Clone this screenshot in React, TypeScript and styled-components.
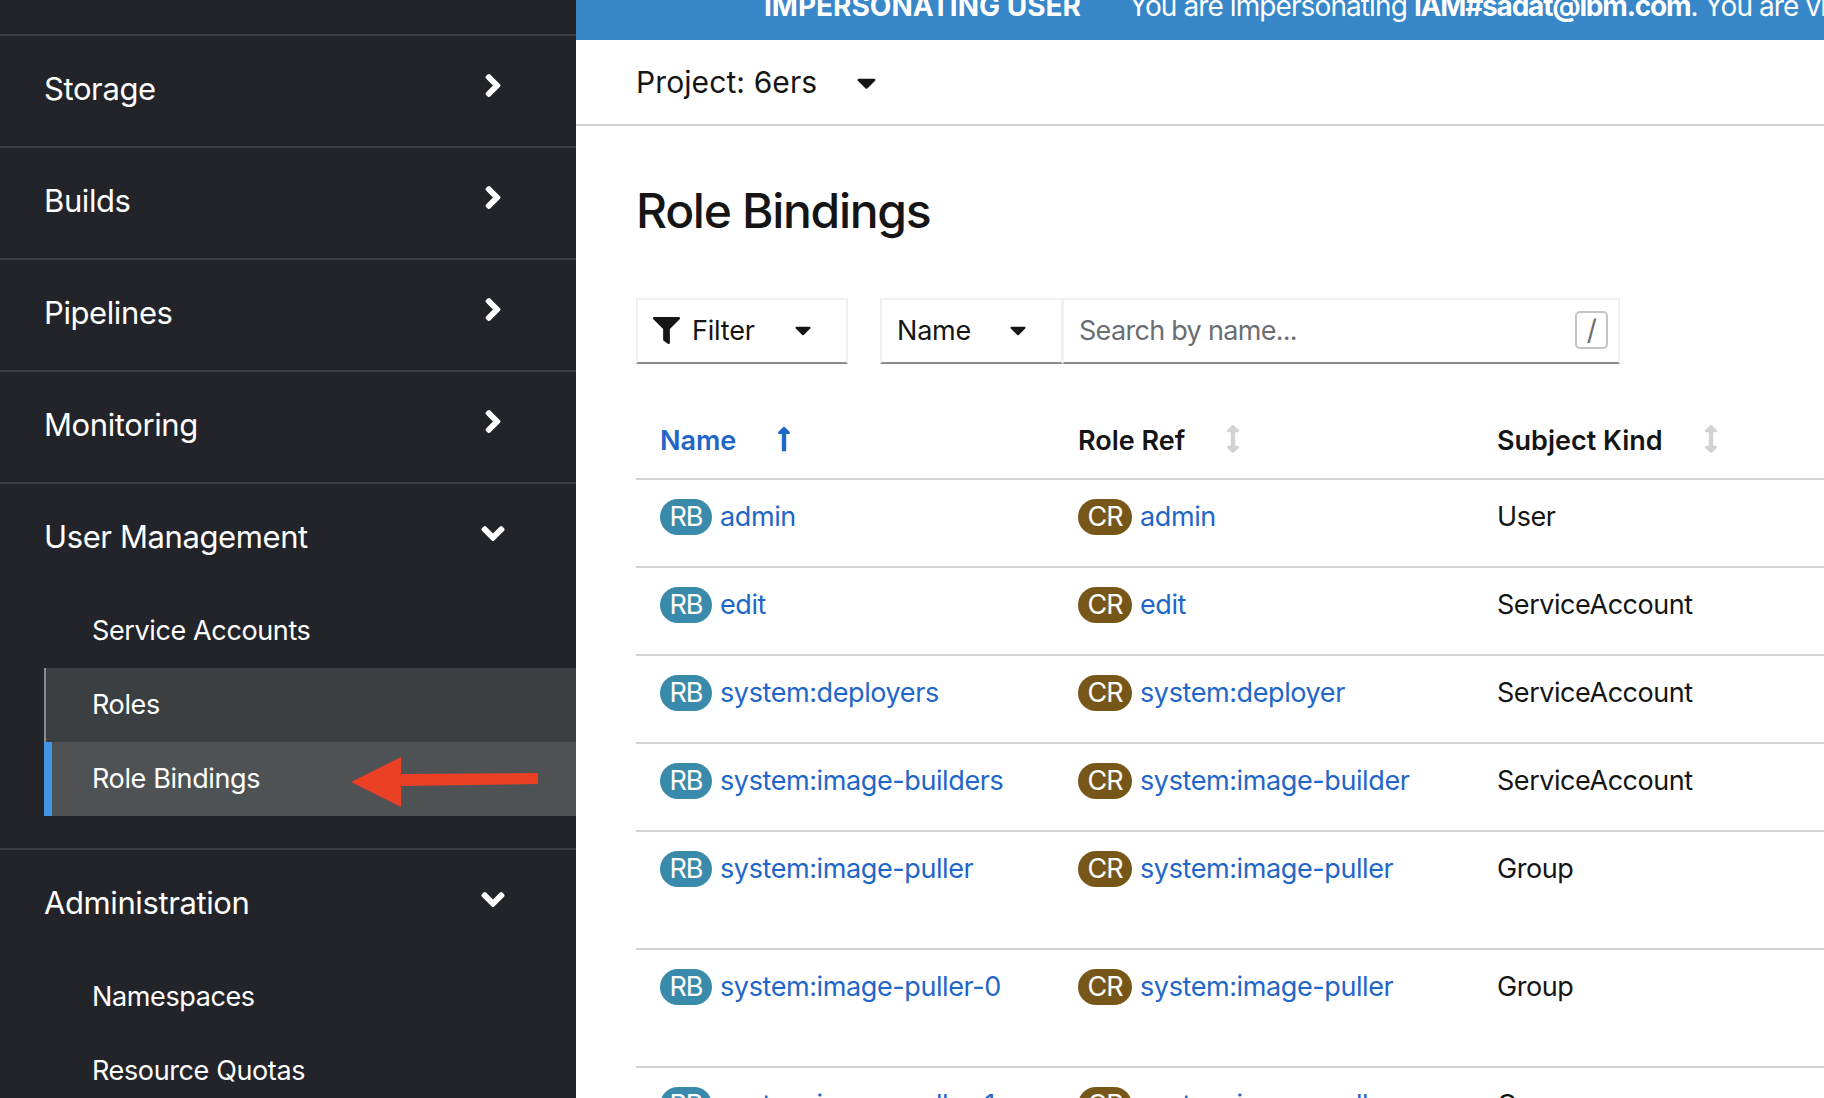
import React from "react";
import styled, { createGlobalStyle } from "styled-components";
import {
  FaAngleDown,
  FaAngleRight,
  FaArrowsAltV,
  FaCaretDown,
  FaFilter,
  FaLongArrowAltUp,
} from "react-icons/fa";

const GlobalStyle = createGlobalStyle`
  html, body {
    margin: 0;
    padding: 0;
    height: 100%;
    background: #fff;
    overflow: hidden;
  }
  * {
    box-sizing: border-box;
  }
`;

const Page = styled.div`
  display: flex;
  width: 1824px;
  height: 1098px;
  overflow: hidden;
  font-family: "Inter", "Liberation Sans", sans-serif;
  color: #151515;
`;

const Sidebar = styled.nav`
  flex: 0 0 576px;
  height: 1098px;
  overflow: hidden;
  background: #232429;
  color: #fff;
  padding-top: 34px;
`;

const NavSection = styled.section<{ $open?: boolean }>`
  border-top: 2px solid #3c3f42;
  padding-bottom: ${(props) => (props.$open ? "32px" : "0")};
`;

const NavHeader = styled.div`
  height: 110px;
  padding: 0 71px 5px 44px;
  display: flex;
  align-items: center;
  justify-content: space-between;
  font-size: 31px;
  letter-spacing: -0.4px;
`;

const NavChevron = styled.span`
  display: flex;
  width: 24px;
  justify-content: center;
  margin-top: -6px;
  font-size: 37px;
`;

const SubList = styled.div`
  margin-left: 44px;
`;

const SubItem = styled.div<{ $state?: "hover" | "current" }>`
  position: relative;
  height: 74px;
  display: flex;
  align-items: center;
  padding: 0 0 2px 48px;
  font-size: 27px;
  letter-spacing: -0.38px;
  background: ${(props) =>
    props.$state === "current"
      ? "#4f5255"
      : props.$state === "hover"
        ? "#3c3f42"
        : "transparent"};
  box-shadow: ${(props) =>
    props.$state === "current"
      ? "inset 8px 0 0 #4394e5"
      : props.$state === "hover"
        ? "inset 2px 0 0 #8a8d90"
        : "none"};
`;

const Callout = styled.svg`
  position: absolute;
  left: 307px;
  top: 15px;
`;

const Main = styled.main`
  flex: 1;
  min-width: 0;
  overflow: hidden;
`;

const Banner = styled.div`
  height: 40px;
  background: #3787c9;
  color: #fff;
  padding-left: 188px;
  display: flex;
  align-items: flex-end;
  padding-bottom: 19px;
  font-size: 28px;
  line-height: 30px;
  white-space: nowrap;
  overflow: hidden;
`;

const BannerTitle = styled.strong`
  font-weight: 700;
  margin-right: 48px;
`;

const BannerMessage = styled.span`
  letter-spacing: -0.9px;
`;

const BannerStrong = styled.strong`
  font-weight: 700;
  letter-spacing: -1.2px;
`;

const ProjectBar = styled.div`
  height: 86px;
  border-bottom: 2px solid #d2d2d2;
  padding-left: 60px;
  display: flex;
  align-items: center;
  gap: 34px;
  font-size: 30px;
  letter-spacing: 0.1px;
`;

const CaretIcon = styled.span`
  display: flex;
  font-size: 31px;
  color: #151515;
`;

const Content = styled.div`
  padding: 0 0 0 60px;
`;

const Title = styled.h1`
  margin: 0;
  padding-top: 56px;
  height: 172px;
  font-size: 48px;
  line-height: 58px;
  font-weight: 500;
  letter-spacing: -1.3px;
`;

const Toolbar = styled.div`
  display: flex;
  gap: 32px;
  height: 66px;
`;

const ToolbarGroup = styled.div`
  display: flex;
`;

const ToolButton = styled.div<{ $width: number }>`
  width: ${(props) => props.$width}px;
  height: 66px;
  display: flex;
  align-items: center;
  padding: 0 15px 2px;
  border: 2px solid #f0f0f0;
  border-bottom: 2px solid #8a8d90;
  font-size: 27px;
  letter-spacing: -0.2px;
`;

const FilterIcon = styled.span`
  display: flex;
  font-size: 27px;
  margin-right: 12px;
`;

const ButtonCaret = styled.span`
  display: flex;
  font-size: 26px;
  margin-left: auto;
  margin-right: 15px;
`;

const SearchBox = styled.div`
  width: 557px;
  height: 66px;
  display: flex;
  align-items: center;
  justify-content: space-between;
  padding: 0 10px 2px 15px;
  border: 2px solid #f0f0f0;
  border-left-width: 1px;
  border-bottom: 2px solid #8a8d90;
  font-size: 27px;
  letter-spacing: -0.7px;
  color: #6a6e73;
`;

const SlashKey = styled.span`
  width: 33px;
  height: 38px;
  display: flex;
  align-items: center;
  justify-content: center;
  border: 2px solid #c4c4c4;
  border-radius: 5px;
  font-size: 28px;
  color: #6a6e73;
`;

const Table = styled.table`
  width: 1255px;
  margin-top: 37px;
  border-collapse: collapse;
  table-layout: fixed;
`;

const HeadCell = styled.th<{ $active?: boolean }>`
  height: 78px;
  padding: 2px 0 0 24px;
  text-align: left;
  font-size: 27px;
  font-weight: 600;
  letter-spacing: 0;
  color: ${(props) => (props.$active ? "#1f66c9" : "#151515")};
  border-bottom: 2px solid #d2d2d2;
`;

const SortIcon = styled.span<{ $active?: boolean }>`
  display: inline-block;
  vertical-align: -3px;
  margin-left: 34px;
  font-size: 28px;
  line-height: 1;
  color: ${(props) => (props.$active ? "#1f66c9" : "#d2d2d2")};
`;

const Row = styled.tr<{ $tall?: boolean }>`
  height: ${(props) => (props.$tall ? 118 : 88)}px;
`;

const Cell = styled.td`
  padding: 19px 0 0 24px;
  vertical-align: top;
  font-size: 27px;
  line-height: 36px;
  letter-spacing: -0.45px;
  border-bottom: 2px solid #d2d2d2;
`;

const Badge = styled.span<{ $kind: "RB" | "CR" }>`
  display: inline-block;
  width: ${(props) => (props.$kind === "RB" ? 52 : 54)}px;
  height: 36px;
  margin-right: 8px;
  border-radius: 18px;
  text-align: center;
  color: #fff;
  font-size: 27px;
  line-height: 36px;
  letter-spacing: -1px;
  vertical-align: top;
  background: ${(props) => (props.$kind === "RB" ? "#3a8aab" : "#775719")};
`;

const ResourceLink = styled.a`
  color: #1f66c9;
  text-decoration: none;
  letter-spacing: -0.4px;
`;

const closedSections = ["Storage", "Builds", "Pipelines", "Monitoring"];

const rows = [
  { name: "admin", ref: "admin", kind: "User" },
  { name: "edit", ref: "edit", kind: "ServiceAccount" },
  { name: "system:deployers", ref: "system:deployer", kind: "ServiceAccount" },
  {
    name: "system:image-builders",
    ref: "system:image-builder",
    kind: "ServiceAccount",
  },
  {
    name: "system:image-puller",
    ref: "system:image-puller",
    kind: "Group",
    tall: true,
  },
  {
    name: "system:image-puller-0",
    ref: "system:image-puller",
    kind: "Group",
    tall: true,
  },
  {
    name: "system:image-puller-1",
    ref: "system:image-puller",
    kind: "Group",
    tall: true,
  },
];

const App = () => {
  return (
    <Page>
      <GlobalStyle />
      <Sidebar>
        {closedSections.map((label) => (
          <NavSection key={label}>
            <NavHeader>
              {label}
              <NavChevron>
                <FaAngleRight />
              </NavChevron>
            </NavHeader>
          </NavSection>
        ))}
        <NavSection $open>
          <NavHeader>
            User Management
            <NavChevron>
              <FaAngleDown />
            </NavChevron>
          </NavHeader>
          <SubList>
            <SubItem>Service Accounts</SubItem>
            <SubItem $state="hover">Roles</SubItem>
            <SubItem $state="current">
              Role Bindings
              <Callout width="188" height="50" viewBox="0 0 188 50">
                <polygon
                  points="0,25 50,0 50,17 187,16 187,27 50,29 50,50"
                  fill="#ea3f24"
                />
              </Callout>
            </SubItem>
          </SubList>
        </NavSection>
        <NavSection $open>
          <NavHeader>
            Administration
            <NavChevron>
              <FaAngleDown />
            </NavChevron>
          </NavHeader>
          <SubList>
            <SubItem>Namespaces</SubItem>
            <SubItem>Resource Quotas</SubItem>
          </SubList>
        </NavSection>
      </Sidebar>
      <Main>
        <Banner>
          <BannerTitle>IMPERSONATING USER</BannerTitle>
          <BannerMessage>
            You are impersonating <BannerStrong>IAM#sadat@ibm.com</BannerStrong>
            . You are viewing all resources
          </BannerMessage>
        </Banner>
        <ProjectBar>
          Project: 6ers
          <CaretIcon>
            <FaCaretDown />
          </CaretIcon>
        </ProjectBar>
        <Content>
          <Title>Role Bindings</Title>
          <Toolbar>
            <ToolButton $width={212}>
              <FilterIcon>
                <FaFilter />
              </FilterIcon>
              Filter
              <ButtonCaret>
                <FaCaretDown />
              </ButtonCaret>
            </ToolButton>
            <ToolbarGroup>
              <ToolButton $width={183}>
                Name
                <ButtonCaret>
                  <FaCaretDown />
                </ButtonCaret>
              </ToolButton>
              <SearchBox>
                Search by name...
                <SlashKey>/</SlashKey>
              </SearchBox>
            </ToolbarGroup>
          </Toolbar>
          <Table>
            <colgroup>
              <col width="418" />
              <col width="419" />
              <col width="418" />
            </colgroup>
            <thead>
              <tr>
                <HeadCell $active>
                  Name
                  <SortIcon $active>
                    <FaLongArrowAltUp />
                  </SortIcon>
                </HeadCell>
                <HeadCell>
                  Role Ref
                  <SortIcon>
                    <FaArrowsAltV />
                  </SortIcon>
                </HeadCell>
                <HeadCell>
                  Subject Kind
                  <SortIcon>
                    <FaArrowsAltV />
                  </SortIcon>
                </HeadCell>
              </tr>
            </thead>
            <tbody>
              {rows.map((row) => (
                <Row key={row.name} $tall={row.tall}>
                  <Cell>
                    <Badge $kind="RB">RB</Badge>
                    <ResourceLink>{row.name}</ResourceLink>
                  </Cell>
                  <Cell>
                    <Badge $kind="CR">CR</Badge>
                    <ResourceLink>{row.ref}</ResourceLink>
                  </Cell>
                  <Cell>{row.kind}</Cell>
                </Row>
              ))}
            </tbody>
          </Table>
        </Content>
      </Main>
    </Page>
  );
};

export default App;
